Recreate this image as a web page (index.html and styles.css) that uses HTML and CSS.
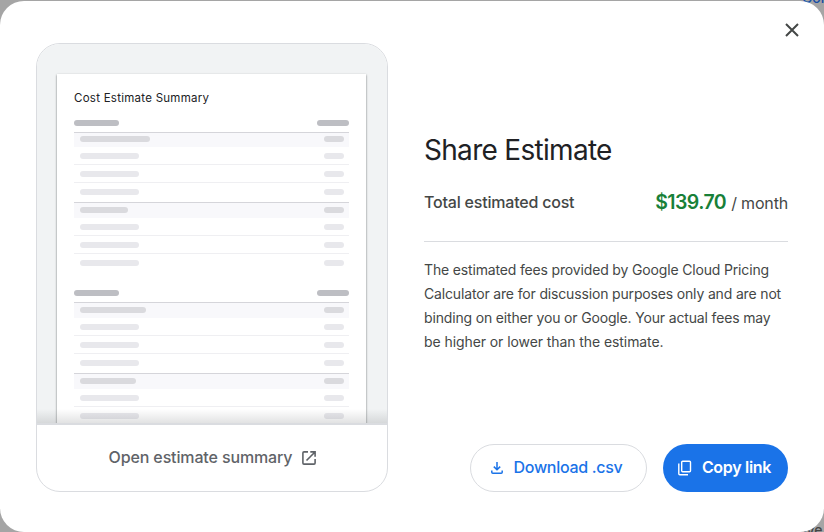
FILE: index.html
```html
<!DOCTYPE html>
<html lang="en">
<head>
<meta charset="utf-8">
<title>Share Estimate</title>
<link rel="stylesheet" href="styles.css">
</head>
<body>
<span class="behind behind-top">Con</span>
<span class="behind behind-bottom">ive</span>
<main class="dialog">
  <button class="close" aria-label="Close"><svg width="14" height="14" viewBox="0 0 14 14"><path d="M1 1l12 12M13 1L1 13" stroke="#444746" stroke-width="2" fill="none"/></svg></button>
  <a class="card">
    <div class="preview">
      <div class="paper">
        <h2>Cost Estimate Summary</h2>
        <div class="head"><i></i><i></i></div>
        <div class="group first"><i></i><i></i></div>
        <div class="item"><i></i><i></i></div>
        <div class="item"><i></i><i></i></div>
        <div class="item last"><i></i><i></i></div>
        <div class="group short"><i></i><i></i></div>
        <div class="item"><i></i><i></i></div>
        <div class="item"><i></i><i></i></div>
        <div class="item last"><i></i><i></i></div>
        <div class="head second"><i></i><i></i></div>
        <div class="group long"><i></i><i></i></div>
        <div class="item"><i></i><i></i></div>
        <div class="item"><i></i><i></i></div>
        <div class="item last"><i></i><i></i></div>
        <div class="group mid"><i></i><i></i></div>
        <div class="item"><i></i><i></i></div>
        <div class="item last"><i></i><i></i></div>
      </div>
    </div>
    <div class="open"><span>Open estimate summary</span><svg width="14" height="14" viewBox="0 0 14 14"><path d="M6 .9H2Q.9.9.9 2v10q0 1.100 1.100 1.100h10q1.100 0 1.100-1.100V8M8.300.9h4.800v4.800M13 1L4.500 9.500" fill="none" stroke="#5f6368" stroke-width="1.600"/></svg></div>
  </a>
  <section class="details">
    <h1>Share Estimate</h1>
    <div class="total"><span class="label">Total estimated cost</span><span class="price"><b>$139.70</b><span class="per">/ month</span></span></div>
    <p>The estimated fees provided by Google Cloud Pricing<br>Calculator are for discussion purposes only and are not<br>binding on either you or Google. Your actual fees may<br><span class="last-line">be higher or lower than the estimate.</span></p>
    <div class="actions">
      <button class="btn download"><svg width="12" height="12" viewBox="0 0 12 12"><path d="M6 0v7.500M2.800 4.600L6 7.800l3.200-3.200M.8 8.500v1.700q0 1 1 1h8.400q1 0 1-1V8.500" fill="none" stroke="#1a73e8" stroke-width="1.500"/></svg><span>Download .csv</span></button>
      <button class="btn copy"><svg width="14" height="16" viewBox="0 0 14 16"><rect x="3.700" y="1.200" width="8.800" height="10.600" rx="1" fill="none" stroke="#fff" stroke-width="1.400"/><path d="M.8 3.500v10.200q0 1 1 1H10" fill="none" stroke="#fff" stroke-width="1.400"/></svg><span>Copy link</span></button>
    </div>
  </section>
</main>
</body>
</html>
```

FILE: styles.css
```css
* { box-sizing: border-box; }
body {
  margin: 0;
  height: 532px;
  overflow: hidden;
  position: relative;
  padding-top: 1px;
  background: #a5a5a5;
  font-family: Inter, Roboto, sans-serif;
}
.behind { position: absolute; font-size: 14px; line-height: 16px; font-weight: 500; }
.behind-top { left: 802px; top: -10px; color: #174ea6; }
.behind-bottom { left: 803px; top: 522px; color: #444; }
.dialog {
  position: relative;
  display: flex;
  gap: 36px;
  height: 531px;
  padding: 42px 36px 40px;
  background: #fff;
  border-radius: 24px;
}
button { margin: 0; padding: 0; border: 0; background: none; font-family: inherit; }
svg { display: block; flex: none; }
.close { position: absolute; top: 22px; right: 25px; }
.card {
  width: 352px;
  height: 449px;
  border: 1px solid #dadce0;
  border-radius: 24px;
  overflow: hidden;
}
.preview {
  position: relative;
  height: 381px;
  padding: 30px 20px 0;
  background: #f1f3f4;
  border-bottom: 2px solid #dadce0;
  overflow: hidden;
}
.preview::after {
  content: "";
  position: absolute;
  left: 0;
  right: 0;
  bottom: 0;
  height: 14px;
  background: linear-gradient(rgba(60,64,67,0), rgba(60,64,67,.15));
}
.paper {
  width: 309px;
  height: 360px;
  padding: 16px 17px 0;
  background: #fff;
  box-shadow: 0 1px 2px rgba(60,64,67,.75);
}
h2 {
  margin: 0;
  height: 24px;
  font-size: 11.500px;
  line-height: 16px;
  font-weight: 400;
  letter-spacing: .26px;
  color: #202124;
  white-space: nowrap;
}
.head, .group, .item { display: flex; justify-content: space-between; }
.paper i { display: block; height: 6px; width: 59px; border-radius: 3px; background: #e8e8ec; }
.paper i:last-child { width: 20px; }
.head { height: 18px; padding-top: 6px; }
.head.second { height: 29px; padding-top: 17px; }
.paper .head i { width: 45px; background: #bdbec3; }
.paper .head i:last-child { width: 32px; }
.group {
  height: 16px;
  padding: 4px 5px 0 6px;
  border-top: 1px solid #d5d5da;
  background: #f8f8fb;
}
.paper .group i { background: #dadade; }
.paper .group i:first-child { width: 70px; }
.group.first { height: 15px; padding-top: 3px; }
.paper .short i:first-child { width: 48px; }
.paper .long i:first-child { width: 66px; }
.paper .mid i:first-child { width: 56px; }
.item { height: 18px; padding: 5.500px 5px 0 6px; border-bottom: 1px solid #efeff2; }
.item.last { height: 19px; border-color: transparent; }
.open {
  display: flex;
  align-items: center;
  justify-content: center;
  gap: 10px;
  height: 66px;
  color: #5f6368;
  font-size: 16px;
  font-weight: 500;
  letter-spacing: -.13px;
}
.open span { padding: 0 0 2px 1px; }
.details { width: 364px; display: flex; flex-direction: column; white-space: nowrap; }
h1 { margin: 89px 0 1px; font-size: 28px; line-height: 36px; font-weight: 400; color: #202124; letter-spacing: -.7px; }
.total {
  display: flex;
  align-items: center;
  justify-content: space-between;
  height: 73px;
  padding-bottom: 6px;
  border-bottom: 1px solid #dadce0;
  color: #444746;
  font-size: 16px;
}
.label { font-weight: 500; letter-spacing: -.2px; }
.price { display: flex; align-items: baseline; gap: 5px; }
.price b { font-size: 19.500px; font-weight: 600; color: #188038; letter-spacing: -.55px; }
.per { letter-spacing: -.17px; }
p { margin: 16px 0 0; font-size: 14px; line-height: 24px; color: #444746; letter-spacing: -.16px; }
.last-line { letter-spacing: -.08px; }
.actions { display: flex; justify-content: flex-end; gap: 16px; margin-top: auto; }
.btn { display: flex; align-items: center; justify-content: center; height: 48px; border-radius: 24px; font-size: 16px; font-weight: 500; }
.btn span { padding-bottom: 2px; }
.download { width: 177px; gap: 11px; padding-right: 4px; border: 1px solid #dadce0; color: #1a73e8; letter-spacing: -.3px; }
.copy { width: 125px; gap: 10px; padding-right: 2px; background: #1a73e8; color: #fff; letter-spacing: -.3px; font-weight: 600; }
```
